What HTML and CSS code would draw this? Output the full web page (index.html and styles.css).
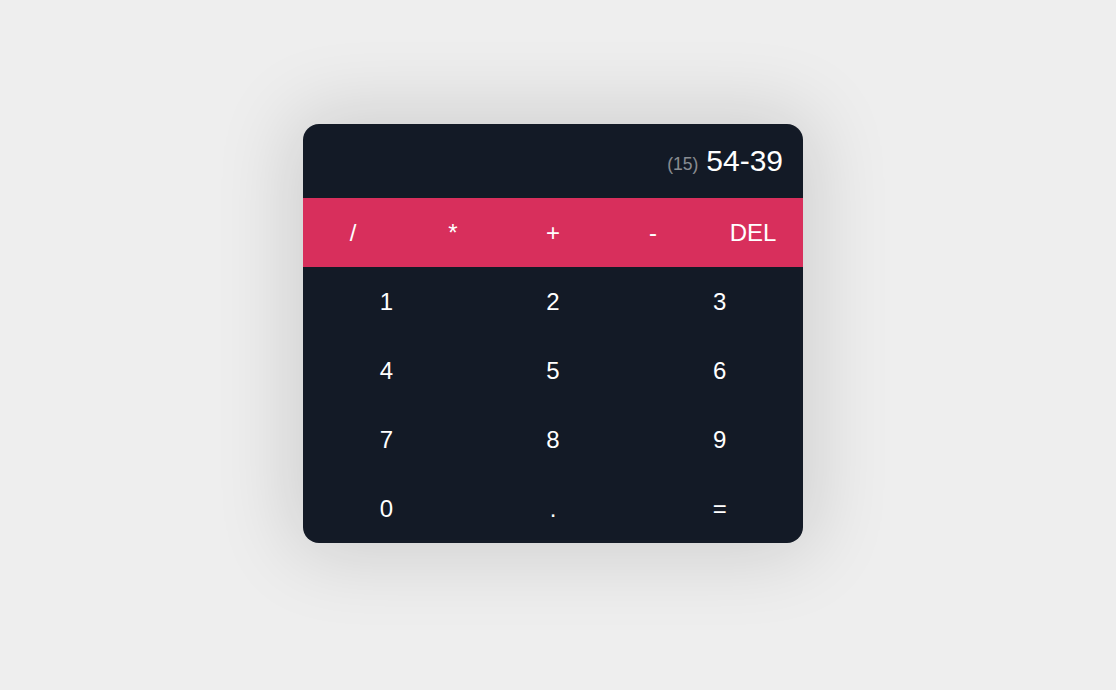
FILE: index.html
```html
<!DOCTYPE html>
<html>
<head>
<meta charset="utf-8">
<link rel="stylesheet" href="styles.css">
</head>
<body>
<div class="page">
  <div class="calc">
    <div class="display"><span class="result">(15)</span><span class="expr">54-39</span></div>
    <div class="ops">
      <button class="key">/</button>
      <button class="key">*</button>
      <button class="key">+</button>
      <button class="key">-</button>
      <button class="key">DEL</button>
    </div>
    <div class="digits">
      <button class="key">1</button>
      <button class="key">2</button>
      <button class="key">3</button>
      <button class="key">4</button>
      <button class="key">5</button>
      <button class="key">6</button>
      <button class="key">7</button>
      <button class="key">8</button>
      <button class="key">9</button>
      <button class="key">0</button>
      <button class="key">.</button>
      <button class="key">=</button>
    </div>
  </div>
</div>
</body>
</html>
```
FILE: styles.css
```css
* { box-sizing: border-box; }
html, body { margin: 0; padding: 0; }
body {
  background: #eeeeee;
  font-family: "Liberation Sans", Arial, sans-serif;
}
.page {
  height: 100vh;
  display: flex;
  align-items: center;
  justify-content: center;
  padding: 0 10px 23px 0;
}
.calc {
  width: 500px;
  background: #131a26;
  border-radius: 16px;
  overflow: hidden;
  box-shadow: 0 0 80px 10px rgba(0, 0, 0, 0.14);
}
.display {
  height: 74px;
  display: flex;
  justify-content: flex-end;
  align-items: center;
  padding: 0 20px;
  color: #fff;
}
.result {
  font-size: 17.5px;
  color: rgba(255, 255, 255, 0.5);
  margin-right: 8px;
  margin-top: 7px;
}
.expr {
  font-size: 30px;
}
.ops {
  display: grid;
  grid-template-columns: repeat(5, 1fr);
  background: #d82f5c;
}
.digits {
  display: grid;
  grid-template-columns: repeat(3, 1fr);
}
.key {
  height: 69px;
  border: none;
  background: transparent;
  color: #fff;
  font-family: inherit;
  font-size: 24px;
  padding: 0;
}
```
